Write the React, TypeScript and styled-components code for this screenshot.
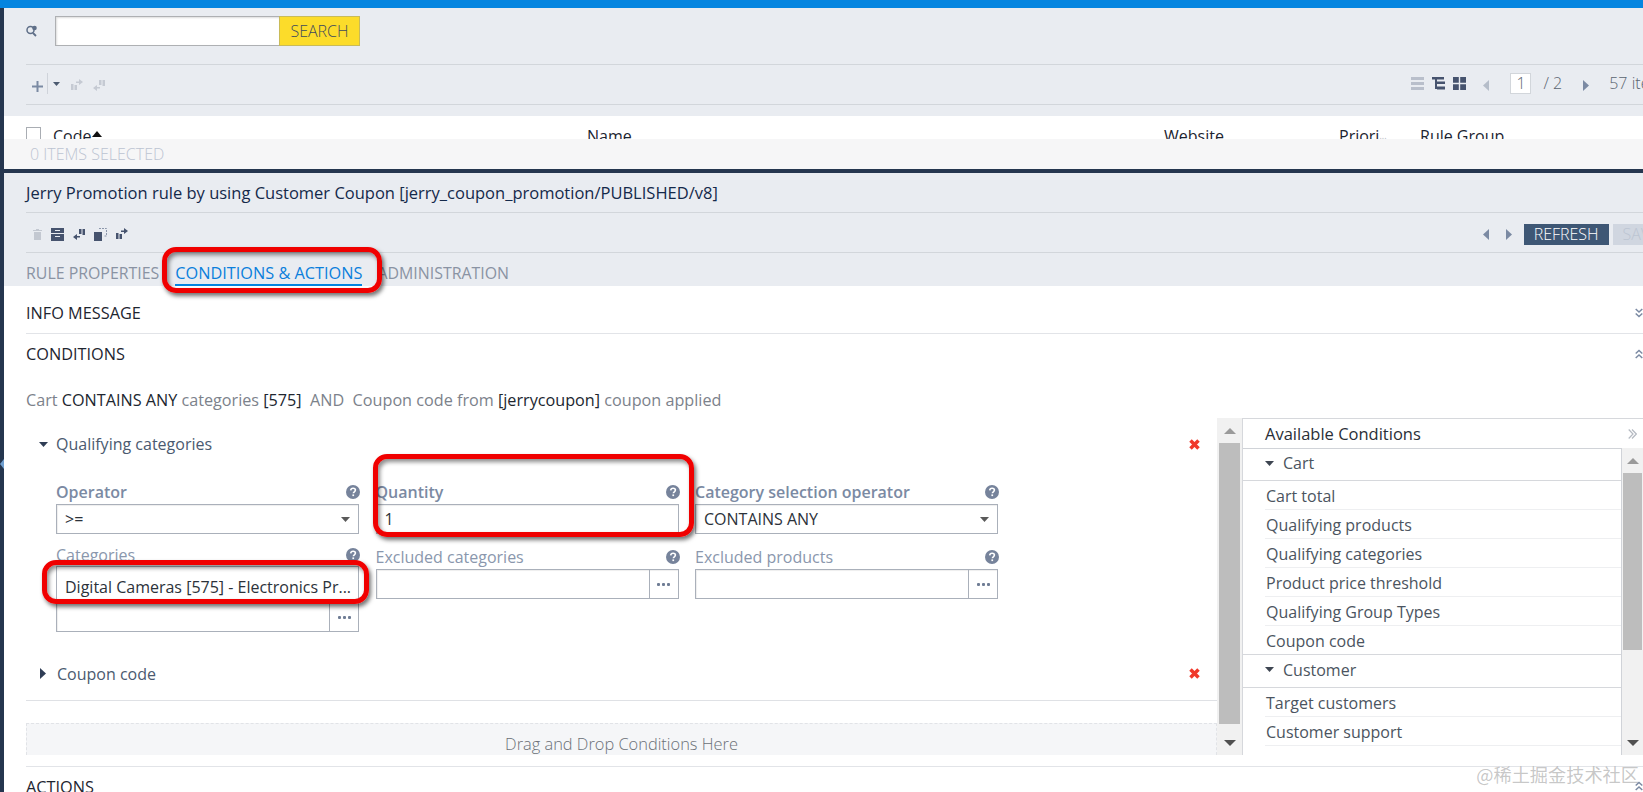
import React from 'react';
import styled, { createGlobalStyle } from 'styled-components';

const Global = createGlobalStyle`
  html, body { margin: 0; padding: 0; background: #fff; overflow: hidden; }
  * { box-sizing: border-box; }
  body { font-family: "Open Sans", "Liberation Sans", "Noto Sans CJK SC", sans-serif; }
`;

const Page = styled.div`
  width: 1643px; height: 792px; overflow: hidden; display: flex; flex-direction: column; position: relative;
  font-family: "Open Sans", "Liberation Sans", sans-serif;
`;
const TopBar = styled.div`height: 8px; background: #0585e0; flex: none;`;
const Body = styled.div`flex: 1; display: flex; min-height: 0;`;
const Strip = styled.div`
  width: 4px; background: #25364f; flex: none; position: relative;
  &::after { content: ""; position: absolute; left: 0; top: 451px; border: 5px solid transparent; border-left: 0; border-right: 4px solid #6f9fd0; }
`;
const Main = styled.div`flex: 1; min-width: 0; display: flex; flex-direction: column; overflow: hidden;`;

const SearchPanel = styled.div`background: #e9ecf1; padding: 0 0 11px 22px; flex: none;`;
const SearchRow = styled.div`height: 57px; border-bottom: 1px solid #d2d6db; padding-top: 8px; display: flex; align-items: flex-start;`;
const SearchGlyph = styled.div`width: 29px; height: 30px; display: flex; align-items: center;`;
const SearchInput = styled.div`width: 224px; height: 30px; background: #fff; border: 1px solid #aeb0b3; border-right: 0; box-shadow: inset 1px 1px 2px #ddd;`;
const SearchButton = styled.div`
  width: 81px; height: 30px; background: #fcdc2a; border: 1px solid #c9bb58; color: #3e4a5c;
  font-size: 16px; font-weight: 300; display: flex; align-items: center; justify-content: center;
`;
const ListToolbar = styled.div`height: 40px; padding-bottom: 3px; border-bottom: 1px solid #d2d6db; display: flex; align-items: center; justify-content: space-between;`;
const ToolGroup = styled.div`display: flex; align-items: center;`;
const ClippedGroup = styled(ToolGroup)<{ $over: number }>`flex: none; margin-right: -${p => p.$over}px;`;
const ToolSep = styled.div`width: 1px; height: 21px; background: #cfd3da; margin: 0 5px 0 4px;`;
const PageBox = styled.div`
  width: 21px; height: 21px; background: #fff; border: 1px solid #d2d6db; color: #5a6470; margin: 0 12px 0 0;
  font-size: 16px; font-weight: 300; display: flex; align-items: center; justify-content: center;
`;
const Muted = styled.span`font-size: 16px; font-weight: 300; color: #5a6470; white-space: nowrap;`;

const GridHeader = styled.div`height: 23px; background: #fff; overflow: hidden; flex: none; position: relative; display: grid; grid-template-columns: 27px 534px 577px 175px 81px 1fr; padding: 9px 0 0 22px; font-size: 16px; color: #1c2430; line-height: 22px;`;
const CheckBox = styled.div`width: 15px; height: 15px; margin-top: 2px; background: #fff; border: 1px solid #a9adb3;`;
const HeaderCell = styled.div`white-space: nowrap; display: flex;`;
const Dots = styled.span`color: #b5b9bf; font-size: 9px; align-self: flex-end; margin-bottom: 2px;`;
const SelectionBar = styled.div`height: 30px; background: #f6f6f7; flex: none; padding-left: 26px; font-size: 16px; font-weight: 300; color: #bcc4d2; line-height: 30px;`;
const Rule = styled.div`height: 4px; background: #25364f; flex: none;`;

const RulePanel = styled.div`background: #e9ecf1; padding-left: 22px; flex: none;`;
const TitleRow = styled.div`height: 40px; border-bottom: 1px solid #d2d6db; font-size: 16.5px; color: #14294a; line-height: 39px; white-space: nowrap;`;
const RuleToolbar = styled.div`height: 40px; padding-top: 3px; border-bottom: 1px solid #d2d6db; display: flex; align-items: center; justify-content: space-between;`;
const ActionButton = styled.div<{ $off?: boolean }>`
  height: 21px; padding: 0 10px; background: ${p => (p.$off ? '#d0d6e0' : '#3e5775')}; color: ${p => (p.$off ? '#bcc5d2' : '#fff')};
  margin-left: 4px; font-size: 16px; font-weight: 300; display: flex; align-items: center; flex: none;
`;
const Tabs = styled.div`height: 33px; display: flex; padding-top: 10px;`;
const Tab = styled.div<{ $on?: boolean; $gap: number }>`
  color: ${p => (p.$on ? '#0b7fdc' : '#8a93a3')}; margin-right: ${p => p.$gap}px; height: 23px; line-height: 21px; white-space: nowrap;
  font-size: ${p => (p.$on ? 16.3 : 15.9)}px;
  border-bottom: 2px solid ${p => (p.$on ? '#0585e0' : 'transparent')};
`;

const Content = styled.div`flex: 1; min-height: 0; padding-left: 22px; background: #fff; overflow: hidden;`;
const Section = styled.div<{ $line?: boolean; $h: number; $top?: number; $bottom?: number }>`
  height: ${p => p.$h}px; padding: ${p => p.$top || 0}px 0 ${p => p.$bottom || 0}px; display: flex; align-items: center; justify-content: space-between; font-size: 16.3px; color: #1e2530;
  ${p => (p.$line ? 'border-bottom: 1px solid #e2e4e8;' : '')}
`;
const Summary = styled.div`height: 43px; padding-top: 14px; font-size: 16.2px; line-height: 22px; color: #7c828b; white-space: pre;`;
const Strong = styled.span`color: #20262f;`;

const Workspace = styled.div`height: 337px; display: flex; flex: none;`;
const Builder = styled.div`width: 1191px; flex: none; display: flex; flex-direction: column;`;
const CondHead = styled.div<{ $h: number; $line?: boolean }>`
  height: ${p => p.$h}px; flex: none; display: flex; align-items: center; padding: 0 17px 0 13px; font-size: 16px; color: #4b5a70;
  ${p => (p.$line ? 'border-bottom: 1px solid #dfe1e5;' : '')}
`;
const CondName = styled.span`margin-left: 8px; flex: 1;`;
const Fields = styled.div`display: grid; grid-template-columns: repeat(3, 303px); column-gap: 16.5px; padding: 7px 0 0 30px; height: 177px; flex: none; align-content: start;`;
const Field = styled.div`display: flex; flex-direction: column; height: 65px;`;
const FieldLabel = styled.div<{ $strong?: boolean }>`
  height: 27px; display: flex; align-items: center; justify-content: space-between; padding: 2px 0 0 0; font-size: 16px; white-space: nowrap;
  color: ${p => (p.$strong ? '#7b8aa3' : '#8a97ad')}; font-weight: ${p => (p.$strong ? 600 : 400)};
`;
const Box = styled.div`height: 30px; border: 1px solid #aab0ba; background: #fff; display: flex; align-items: center; font-size: 16px; color: #2c323a; padding-left: 8px; box-shadow: inset 1px 1px 1px #eee; flex: none;`;
const BoxText = styled.span`flex: 1; white-space: nowrap; overflow: hidden;`;
const Pick = styled.div`width: 29px; height: 28px; border-left: 1px solid #aab0ba; flex: none; display: flex; align-items: center; justify-content: center; gap: 2px;`;
const Dot = styled.i`width: 3px; height: 3px; background: #6f7d95; border-radius: 1px;`;
const Chosen = styled.div`
  height: 36px; font-size: 16px; color: #2c323a; padding: 7px 0 0 8px; line-height: 26px; white-space: nowrap; overflow: hidden; flex: none;
  border: 1px solid #aab0ba; border-bottom: 0;
`;
const Drop = styled.div`
  height: 32px; flex: none; margin-top: 22px; background: #f5f6f8; border: 1px dashed #e1e3e7; border-bottom: 0; font-size: 16.4px; font-weight: 300; color: #6b7077;
  display: flex; align-items: center; justify-content: center; padding-top: 8px;
`;
const Bar = styled.div<{ $w?: number }>`
  ${p => (p.$w ? `width: ${p.$w}px; flex: none;` : 'flex: 1;')} background: #f1f1f1; display: flex; flex-direction: column; align-items: center; position: relative; overflow: hidden;
`;
const Thumb = styled.div<{ $top: number; $h: number; $w: number }>`
  position: absolute; top: ${p => p.$top}px; height: ${p => p.$h}px; width: ${p => p.$w}px; background: #bdbdbd;
`;
const UpArrow = styled.div`
  position: absolute; top: 10px; border: 6px solid transparent; border-top: 0; border-bottom: 6px solid #9a9a9a;
`;
const DownArrow = styled.div<{ $top: number }>`
  position: absolute; top: ${p => p.$top}px; border: 6px solid transparent; border-bottom: 0; border-top: 6px solid #505050;
`;
const Panel = styled.div`flex: 1; min-width: 0; display: flex; flex-direction: column; border-top: 1px solid #d6d8dc; border-left: 1px solid #d6d8dc;`;
const PanelHead = styled.div`height: 29px; flex: none; display: flex; align-items: center; justify-content: space-between; padding: 0 0 0 22px; font-size: 16.5px; font-weight: 500; color: #2a2f37;`;
const PanelBody = styled.div`flex: 1; min-height: 0; display: flex;`;
const List = styled.div`width: 379px; flex: none; border: 1px solid #d0d3d8; border-width: 1px 1px 0 0; overflow: hidden;`;
const Group = styled.div<{ $top?: boolean }>`
  height: ${p => (p.$top ? 32 : 34)}px; display: flex; align-items: center; padding: 0 0 3px 22px; font-size: 16px; color: #4b5460;
  border-bottom: 1px solid #d6d8dc; ${p => (p.$top ? '' : 'border-top: 1px solid #d6d8dc;')}
`;
const GroupName = styled.span`margin-left: 9px;`;
const Items = styled.div`padding-left: 22px;`;
const Item = styled.div<{ $last?: boolean }>`
  height: ${p => (p.$last ? 28 : 29)}px; padding-left: 1px; font-size: 16px; color: #4b5460; line-height: 31px; white-space: nowrap; ${p => (p.$last ? '' : 'border-bottom: 1px solid #eeeff1;')}
`;
const Actions = styled.div`height: 35px; margin-top: 11px; border-top: 1px solid #e2e4e8; font-size: 16.3px; color: #1e2530; padding-top: 9px; line-height: 22px;`;
const Watermark = styled.div`
  position: absolute; right: 4px; top: 761px; font-size: 18.2px; color: rgba(120,120,120,.42); white-space: nowrap; font-family: "Noto Sans CJK SC", sans-serif;
`;
const Corner = styled.div`position: absolute; right: 0; top: 781px; line-height: 0;`;
const Mark = styled.div<{ $x: number; $y: number; $w: number; $h: number }>`
  position: absolute; left: ${p => p.$x}px; top: ${p => p.$y}px; width: ${p => p.$w}px; height: ${p => p.$h}px;
  border: 5px solid #f00000; border-radius: 14px; box-shadow: 2px 3px 4px rgba(0,0,0,.55), inset 2px 3px 4px rgba(0,0,0,.45); pointer-events: none;
`;
const Ic = styled.svg<{ $m?: string }>`display: block; flex: none; margin: ${p => p.$m || '0'};`;

const Help = () => (
  <Ic $m="0 -1px 0 0" width="14" height="14" viewBox="0 0 14 14"><circle cx="7" cy="7" r="7" fill="#76839b" />
    <path d="M4.700 5.400c.1-1.400 1-2.200 2.400-2.200s2.300.8 2.300 1.900c0 1.800-2 1.600-2 3.100" stroke="#fff" strokeWidth="1.600" fill="none" /><rect x="6.400" y="9.400" width="1.700" height="1.700" fill="#fff" /></Ic>
);
const Caret = ({ c = '#5a5a5a', m }: { c?: string; m?: string }) => (
  <Ic $m={m} width="9" height="5" viewBox="0 0 9 5"><path d="M0 0h9L4.500 5z" fill={c} /></Ic>
);
const Side = ({ left, c, m }: { left?: boolean; c: string; m?: string }) => (
  <Ic $m={m} width="6" height="11" viewBox="0 0 6 11"><path d={left ? 'M6 0v11L0 5.500z' : 'M0 0v11l6-5.500z'} fill={c} /></Ic>
);
const Swap = ({ c, m, flip }: { c: string; m?: string; flip?: boolean }) => (
  <Ic $m={m} width="12" height="12" viewBox="0 0 12 12" style={flip ? { transform: 'rotate(180deg)' } : undefined}>
    <path d="M0 5h2.500v6H0zM3.500 6H6v5H3.500z" fill={c} /><path d="M5 2.500h3V0l4 3-4 3V4H5z" fill={c} /></Ic>
);
const Chev = ({ up }: { up?: boolean }) => (
  <Ic width="8" height="10" viewBox="0 0 8 10" style={up ? { transform: 'rotate(180deg)' } : undefined}>
    <path d="M.7 1l3.300 3 3.300-3M.7 5.500l3.300 3 3.300-3" fill="none" stroke="#7b8aa3" strokeWidth="1.500" /></Ic>
);
const Cross = () => (
  <Ic width="11" height="11" viewBox="0 0 11 11"><path d="M1.500 1.500l8 8M9.500 1.500l-8 8" stroke="#f0392b" strokeWidth="3.500" /></Ic>
);
const Ellipsis = () => <Pick><Dot /><Dot /><Dot /></Pick>;

const cartItems = ['Cart total', 'Qualifying products', 'Qualifying categories', 'Product price threshold', 'Qualifying Group Types'];

export default function App() {
  return (
    <Page>
      <Global />
      <TopBar />
      <Body>
        <Strip />
        <Main>
          <SearchPanel>
            <SearchRow>
              <SearchGlyph>
                <Ic width="12" height="12" viewBox="0 0 12 12"><circle cx="4.500" cy="5" r="3.500" fill="none" stroke="#5f6f88" strokeWidth="1.500" /><path d="M7 8l3 3" stroke="#5f6f88" strokeWidth="1.800" /><circle cx="8.500" cy="3" r="2.300" fill="#5f6f88" /></Ic>
              </SearchGlyph>
              <SearchInput />
              <SearchButton>SEARCH</SearchButton>
            </SearchRow>
            <ListToolbar>
              <ToolGroup>
                <Ic $m="6px 0 0 6px" width="11" height="11" viewBox="0 0 11 11"><path d="M4.500 0h2v4.500H11v2H6.500V11h-2V6.500H0v-2h4.500z" fill="#7b8aa3" /></Ic>
                <ToolSep />
                <Ic $m="2px 0 0 0" width="7" height="4" viewBox="0 0 7 4"><path d="M0 0h7L3.500 4z" fill="#4b5a70" /></Ic>
                <Swap c="#c5cad3" m="4px 0 0 11px" />
                <Swap c="#c5cad3" m="4px 0 0 10px" flip />
              </ToolGroup>
              <ClippedGroup $over={28}>
                <Ic width="13" height="13" viewBox="0 0 13 13"><path d="M0 0h13v3H0zM0 5h13v3H0zM0 10h13v3H0z" fill="#b9bfcb" /></Ic>
                <Ic $m="0 0 0 8px" width="13" height="13" viewBox="0 0 13 13"><path d="M0 0h12v2.500H0zM3 2h2v10H3zM5 4.500h8V7H5zM5 9.500h8V12.500H5z" fill="#46536e" /></Ic>
                <Ic $m="0 0 0 8px" width="13" height="13" viewBox="0 0 13 13"><path d="M0 0h5.800v5.800H0zM7.200 0H13v5.800H7.200zM0 7.200h5.800V13H0zM7.200 7.200H13V13H7.200z" fill="#46536e" /></Ic>
                <Side left c="#b5bdc9" m="4px 21px 0 17px" />
                <PageBox>1</PageBox>
                <Muted>/ 2</Muted>
                <Side c="#7b8aa3" m="4px 20px 0 21px" />
                <Muted>57 items</Muted>
              </ClippedGroup>
            </ListToolbar>
          </SearchPanel>

          <GridHeader>
            <CheckBox />
            <HeaderCell>Code<Ic $m="6px 0 0 1px" width="10" height="6" viewBox="0 0 10 6"><path d="M5 0l5 6H0z" fill="#111" /></Ic></HeaderCell>
            <HeaderCell>Name</HeaderCell>
            <HeaderCell>Website</HeaderCell>
            <HeaderCell>Priori<Dots>...</Dots></HeaderCell>
            <HeaderCell>Rule Group</HeaderCell>
          </GridHeader>
          <SelectionBar>0 ITEMS SELECTED</SelectionBar>
          <Rule />

          <RulePanel>
            <TitleRow>Jerry Promotion rule by using Customer Coupon [jerry_coupon_promotion/PUBLISHED/v8]</TitleRow>
            <RuleToolbar>
              <ToolGroup>
                <Ic $m="0 0 0 7px" width="9" height="11" viewBox="0 0 9 11"><path d="M0 1h9v1H0zM3 0h3v1H3zM1 3h7v8H1z" fill="#c3c8d1" /></Ic>
                <Ic $m="0 0 0 9px" width="13" height="13" viewBox="0 0 13 13"><path d="M0 0h13v5H0zM0 6h13v7H0z" fill="#46536e" /><path d="M4 2h5v1H4zM4 8h5v1H4z" fill="#e9ecf1" /></Ic>
                <Swap c="#46536e" m="0 0 0 9px" flip />
                <Ic $m="0 0 0 9px" width="13" height="13" viewBox="0 0 13 13"><path d="M0 4h8v9H0z" fill="#46536e" /><path d="M5 .500h7.500V8H10" fill="none" stroke="#8c97ab" strokeDasharray="2 1" /></Ic>
                <Swap c="#46536e" m="0 0 0 9px" />
              </ToolGroup>
              <ClippedGroup $over={26}>
                <Side left c="#7b8aa3" />
                <Side c="#7b8aa3" m="0 8px 0 17px" />
                <ActionButton>REFRESH</ActionButton>
                <ActionButton $off>SAVE</ActionButton>
              </ClippedGroup>
            </RuleToolbar>
            <Tabs>
              <Tab $gap={16}>RULE PROPERTIES</Tab>
              <Tab $on $gap={15}>CONDITIONS &amp; ACTIONS</Tab>
              <Tab $gap={0}>ADMINISTRATION</Tab>
            </Tabs>
          </RulePanel>

          <Content>
            <Section $h={48} $top={6} $line>INFO MESSAGE<Chev /></Section>
            <Section $h={41} $bottom={2}>CONDITIONS<Chev up /></Section>
            <Summary>Cart <Strong>CONTAINS ANY</Strong> categories <Strong>[575]</Strong>  AND  Coupon code from <Strong>[jerrycoupon]</Strong> coupon applied</Summary>
            <Workspace>
              <Builder>
                <CondHead $h={52}>
                  <Caret c="#2f3d55" />
                  <CondName>Qualifying categories</CondName>
                  <Cross />
                </CondHead>
                <Fields>
                  <Field><FieldLabel $strong>Operator<Help /></FieldLabel><Box><BoxText>&gt;=</BoxText><Caret m="0 8px 0 0" /></Box></Field>
                  <Field><FieldLabel $strong>Quantity<Help /></FieldLabel><Box><BoxText>1</BoxText></Box></Field>
                  <Field><FieldLabel $strong>Category selection operator<Help /></FieldLabel><Box><BoxText>CONTAINS ANY</BoxText><Caret m="0 8px 0 0" /></Box></Field>
                  <Field>
                    <FieldLabel>Categories<Help /></FieldLabel>
                    <Chosen>Digital Cameras [575] - Electronics Pr...</Chosen>
                    <Box><BoxText /><Ellipsis /></Box>
                  </Field>
                  <Field><FieldLabel>Excluded categories<Help /></FieldLabel><Box><BoxText /><Ellipsis /></Box></Field>
                  <Field><FieldLabel>Excluded products<Help /></FieldLabel><Box><BoxText /><Ellipsis /></Box></Field>
                </Fields>
                <CondHead $h={54} $line>
                  <Side c="#2f3d55" m="0 3px 0 1px" />
                  <CondName>Coupon code</CondName>
                  <Cross />
                </CondHead>
                <Drop>Drag and Drop Conditions Here</Drop>
              </Builder>
              <Bar $w={25}>
                <UpArrow />
                <Thumb $top={25} $h={281} $w={21} />
                <DownArrow $top={322} />
              </Bar>
              <Panel>
                <PanelHead>Available Conditions
                  <Ic $m="0 6px 0 0" width="9" height="10" viewBox="0 0 9 10"><path d="M.7.500L5 5 .7 9.500M4 .500L8.300 5 4 9.500" fill="none" stroke="#b5bac2" strokeWidth="1.200" /></Ic>
                </PanelHead>
                <PanelBody>
                  <List>
                    <Group $top><Caret c="#3e4652" /><GroupName>Cart</GroupName></Group>
                    <Items>
                      {cartItems.map(t => <Item key={t}>{t}</Item>)}
                      <Item $last>Coupon code</Item>
                    </Items>
                    <Group><Caret c="#3e4652" /><GroupName>Customer</GroupName></Group>
                    <Items>
                      <Item>Target customers</Item>
                      <Item>Customer support</Item>
                      <Item $last>Segment lead</Item>
                    </Items>
                  </List>
                  <Bar>
                    <UpArrow />
                    <Thumb $top={25} $h={177} $w={19} />
                    <DownArrow $top={292} />
                  </Bar>
                </PanelBody>
              </Panel>
            </Workspace>
            <Actions>ACTIONS</Actions>
          </Content>
        </Main>
      </Body>
      <Watermark>@稀土掘金技术社区</Watermark>
      <Corner><Chev up /></Corner>
      <Mark $x={162} $y={247} $w={220} $h={46} />
      <Mark $x={373} $y={454} $w={321} $h={83} />
      <Mark $x={42} $y={560} $w={327} $h={44} />
    </Page>
  );
}
